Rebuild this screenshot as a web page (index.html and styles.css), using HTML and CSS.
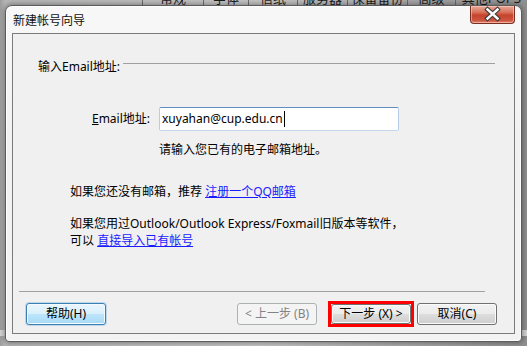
FILE: index.html
```html
<!DOCTYPE html>
<html lang="zh-CN">
<head>
<meta charset="utf-8">
<title>新建帐号向导</title>
<link rel="stylesheet" href="styles.css">
</head>
<body>
<div class="desk">
  <div class="tabs">
    <span class="tab t1">常规</span>
    <span class="tab t2">字体</span>
    <span class="tab t3">信纸</span>
    <span class="tab t4">服务器</span>
    <span class="tab t5">保留备份</span>
    <span class="tab t6">高级</span>
    <span class="tab t7">其他POP3</span>
  </div>
</div>
<div class="window">
  <div class="titlebar">
    <span class="title">新建帐号向导</span>
    <span class="close">
      <svg width="45" height="18" viewBox="0 0 45 18">
        <path d="M17.5 4.5 L27.5 13.5 M27.5 4.5 L17.5 13.5" stroke="#3b3b3b" stroke-width="4.6" stroke-linecap="square"/>
        <path d="M17.5 4.5 L27.5 13.5 M27.5 4.5 L17.5 13.5" stroke="#ffffff" stroke-width="2.4" stroke-linecap="square"/>
      </svg>
    </span>
  </div>
  <div class="client">
    <div class="page">
      <div class="group-head"><span class="group-title">输入Email地址:</span><i class="rule"></i></div>
      <div class="field">
        <label class="field-label"><u>E</u>mail地址:</label>
        <div class="input">xuyahan@cup.edu.cn<span class="caret"></span></div>
      </div>
      <div class="hint">请输入您已有的电子邮箱地址。</div>
      <p class="note">如果您还没有邮箱，推荐 <a class="link">注册一个QQ邮箱</a></p>
      <p class="note two">如果您用过Outlook/Outlook Express/Foxmail旧版本等软件，<br>可以 <a class="link">直接导入已有帐号</a></p>
    </div>
    <div class="sep"></div>
    <div class="buttons">
      <button class="btn hot">帮助(H)</button>
      <button class="btn back" disabled>&lt; 上一步 (B)</button>
      <span class="mark"><button class="btn next">下一步 (X) &gt;</button></span>
      <button class="btn cancel">取消(C)</button>
    </div>
  </div>
</div>
</body>
</html>
```
FILE: styles.css
```css
* { box-sizing: border-box; }
html, body { margin: 0; }
body {
  width: 527px;
  height: 346px;
  overflow: hidden;
  position: relative;
  font-family: "Noto Sans", "Noto Sans CJK SC", sans-serif;
  font-size: 12px;
  color: #000;
  background: linear-gradient(90deg, #9c9c9c 0, #b5b5b5 5px, #c4c4c4 50%, #8f8f8f 100%);
}
.desk {
  height: 346px;
  background: linear-gradient(#ebebeb 0, #ebebeb 6px, transparent 6px), linear-gradient(transparent 340px, #d3d3d3 340px);
}
.tabs {
  display: flex;
  margin-left: 142px;
  margin-top: -10px;
  height: 16px;
  line-height: 16px;
  font-size: 13px;
  color: #1a1a1a;
}
.tab { border-left: 1px solid #6b6b6b; text-align: center; }
.t1 { width: 61px; }
.t2 { width: 45px; }
.t3 { width: 49px; }
.t4 { width: 50px; }
.t5 { width: 60px; }
.t6 { width: 48px; }
.t7 { width: 72px; }

.window {
  position: absolute;
  left: 5px;
  top: 5px;
  width: 517px;
  height: 337px;
  border: 1px solid #5c5c5c;
  border-radius: 7px 7px 4px 4px;
  background: linear-gradient(#f8f8f8, #f1f1f1 40%, #f3f3f3);
  box-shadow: 0 0 5px 1px rgba(0, 0, 0, .35), inset 0 0 0 1px #fdfdfd;
  display: flex;
  flex-direction: column;
  padding: 0 6px 7px;
}
.titlebar {
  height: 27px;
  display: flex;
  justify-content: space-between;
  align-items: flex-start;
}
.title {
  padding: 7px 0 0 1px;
  line-height: 14px;
  font-family: "Noto Sans CJK SC", sans-serif;
  color: #111;
}
.close {
  display: block;
  width: 45px;
  height: 18px;
  border: 1px solid #7a2e22;
  border-top: none;
  border-radius: 0 0 4px 4px;
  background: linear-gradient(#e9a898 0, #d9765f 35%, #c7432c 55%, #cd5540 85%, #e08a73 100%);
  box-shadow: inset 0 0 0 1px rgba(255, 220, 210, .5);
}
.close svg { display: block; margin: -1px 0 0 -1px; }

.client {
  flex: 1;
  border: 1px solid #7b7b7b;
  background: #f0f0f0;
  display: flex;
  flex-direction: column;
}
.page { flex: 1; }
.group-head {
  display: flex;
  margin: 25px 19px 0 25px;
  line-height: 16px;
}
.group-title { padding-right: 3px; }
.rule {
  flex: 1;
  height: 1px;
  margin-top: 4px;
  background: #a0a0a0;
}
.field {
  display: flex;
  align-items: center;
  margin-top: 32px;
}
.field-label {
  width: 137px;
  text-align: right;
  line-height: 16px;
}
.input {
  margin-left: 9px;
  width: 240px;
  height: 24px;
  border: 1px solid;
  border-color: #5d8cc0 #b6cde6 #c3d8ee #b6cde6;
  border-radius: 2px;
  background: #fff;
  padding-left: 2px;
  line-height: 22px;
  font-size: 12px;
  display: flex;
  align-items: center;
}
.caret {
  display: inline-block;
  width: 1px;
  height: 16px;
  background: #000;
  margin-left: 1px;
}
.hint {
  margin: 11px 0 0 146px;
  line-height: 16px;
}
.note {
  margin: 26px 0 0 57px;
  line-height: 16px;
}
.note.two {
  margin-top: 15px;
  line-height: 17px;
}
.link { color: #1b1bff; text-decoration: underline; }
.sep {
  height: 1px;
  background: #a0a0a0;
  margin: 0 29px 0 6px;
}
.buttons {
  display: flex;
  align-items: center;
  padding: 9px 17px 6px 13px;
}
.btn {
  width: 80px;
  height: 22px;
  border: 1px solid #707070;
  border-radius: 3px;
  background: linear-gradient(#f2f2f2 0, #ebebeb 50%, #dddddd 50%, #cfcfcf 100%);
  box-shadow: inset 0 0 0 1px #fbfbfb;
  font: inherit;
  color: #000;
  padding: 0;
  line-height: 18px;
}
.btn.hot {
  border-color: #3c7fb1;
  background: linear-gradient(#eaf6fd 0, #d9f0fc 50%, #bee6fd 50%, #a7d9f5 100%);
  box-shadow: inset 0 0 0 1px #f4fbff, 0 0 0 1px rgba(95, 170, 230, .35);
}
.btn.back {
  margin-left: auto;
  border-color: #adb2b5;
  background: #f4f4f4;
  color: #838383;
  box-shadow: none;
}
.mark {
  display: block;
  margin-left: 11px;
  border: 3px solid #ff0000;
}
.btn.next { display: block; height: 20px; }
.btn.cancel { margin-left: 3px; }
```
